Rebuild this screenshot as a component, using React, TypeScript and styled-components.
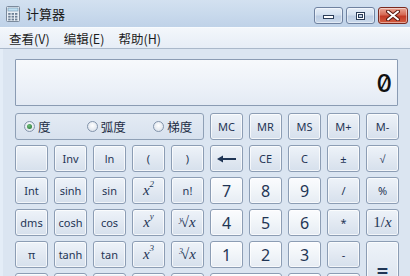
import React, { useState } from 'react';
import styled, { createGlobalStyle, css } from 'styled-components';

const GlobalStyle = createGlobalStyle`
  html, body {
    margin: 0;
    padding: 0;
    overflow: hidden;
    background: #dbe5f1;
  }
  body {
    font-family: 'Noto Sans', 'Noto Sans CJK SC', sans-serif;
  }
`;

const CJK = `'Noto Sans CJK SC', 'Noto Sans', sans-serif`;

const Window = styled.div`
  width: 410px;
  height: 276px;
  overflow: hidden;
  display: flex;
  flex-direction: column;
  background: #dbe5f1;
`;

const TitleBar = styled.div`
  height: 27px;
  flex: none;
  display: flex;
  align-items: center;
  padding: 0 2px 0 6px;
  background: linear-gradient(#d3e1f0 0%, #c8d9ec 55%, #bfd2e8 100%);
`;

const TitleText = styled.span`
  margin-left: 6px;
  font-family: ${CJK};
  font-size: 13px;
  color: #1b1b1b;
  flex: 1;
`;

const CaptionGroup = styled.div`
  display: flex;
  gap: 3px;
  align-self: flex-start;
  margin-top: 7px;
`;

type CapKind = 'plain' | 'close';

const CaptionButton = styled.div<{ $kind: CapKind }>`
  width: ${(p) => (p.$kind === 'close' ? 30 : 29)}px;
  height: 17px;
  box-sizing: border-box;
  border: 1px solid ${(p) => (p.$kind === 'close' ? '#7a2a20' : '#6f82a0')};
  border-radius: 3px;
  display: flex;
  align-items: center;
  justify-content: center;
  box-shadow: inset 0 0 0 1px rgba(255, 255, 255, 0.45);
  background: ${(p) =>
    p.$kind === 'close'
      ? 'linear-gradient(#e9a898 0%, #d66a55 45%, #c23a26 55%, #d35c40 100%)'
      : 'linear-gradient(#e6eef8 0%, #d3e0ef 45%, #bccde3 55%, #cbdaec 100%)'};
`;

const MenuBar = styled.div`
  height: 20px;
  flex: none;
  display: flex;
  align-items: center;
  padding-left: 9px;
  gap: 14px;
  background: linear-gradient(#f3f7fb, #e6edf6);
  border-top: 1px solid #f8fbfe;
  border-bottom: 1px solid #aab8ca;
`;

const MenuItem = styled.span`
  font-family: ${CJK};
  font-size: 12.5px;
  color: #1e1e1e;
`;

const Body = styled.div`
  flex: 1;
  padding: 10px 12px 0 12px;
  background: #dbe5f1;
  border-left: 3px solid #e4edf7;
`;

const Display = styled.div`
  height: 47px;
  box-sizing: border-box;
  border: 1px solid #8a9bb3;
  border-radius: 1px;
  background: linear-gradient(#f7f9fc 0%, #ecf1f8 60%, #e3eaf4 100%);
  display: flex;
  align-items: flex-end;
  justify-content: flex-end;
  padding: 0 5px 9px 0;
  margin-bottom: 7px;
`;

const Readout = styled.span`
  font-family: Inter, 'DejaVu Sans Mono', monospace;
  font-variant-numeric: slashed-zero;
  font-feature-settings: 'zero' 1;
  font-weight: 500;
  font-size: 24px;
  line-height: 24px;
  color: #111;
`;

const Keypad = styled.div`
  display: grid;
  grid-template-columns: repeat(10, 33px);
  grid-auto-rows: 27px;
  column-gap: 6px;
  row-gap: 5px;
`;

const GroupBox = styled.div`
  grid-column: span 5;
  box-sizing: border-box;
  border: 1px solid #8fa0b6;
  border-radius: 3px;
  background: linear-gradient(#e4ebf4, #d7e1ee);
  display: flex;
  align-items: center;
  padding-left: 8px;
`;

const RadioLabel = styled.label<{ $width: number }>`
  display: flex;
  align-items: center;
  width: ${(p) => p.$width}px;
  font-family: ${CJK};
  font-size: 12.5px;
  color: #1e2d45;
`;

const RadioDot = styled.span<{ $on: boolean }>`
  width: 11px;
  height: 11px;
  box-sizing: border-box;
  border-radius: 50%;
  border: 1px solid #8394ab;
  background: radial-gradient(circle at 50% 40%, #ffffff, #d4dce7);
  margin-right: 3px;
  display: flex;
  align-items: center;
  justify-content: center;
  &::after {
    content: '';
    display: ${(p) => (p.$on ? 'block' : 'none')};
    width: 5px;
    height: 5px;
    border-radius: 50%;
    background: radial-gradient(circle at 40% 35%, #6fc07a, #1f6b2e);
  }
`;

type KeyKind = 'fn' | 'num';

const Key = styled.button<{ $kind?: KeyKind; $tall?: boolean; $wide?: boolean }>`
  all: unset;
  box-sizing: border-box;
  border: 1px solid #8c9db4;
  border-radius: 3px;
  display: flex;
  align-items: center;
  justify-content: center;
  color: #1f3555;
  font-family: 'Noto Sans', sans-serif;
  font-size: 11px;
  box-shadow: inset 0 0 0 1px rgba(255, 255, 255, 0.7);
  background: linear-gradient(#eef3f9 0%, #e2e9f2 50%, #d6e0ec 100%);
  ${(p) =>
    p.$kind === 'num' &&
    css`
      font-size: 16px;
      background: linear-gradient(#fbfcfe 0%, #f1f5f9 50%, #e6ecf3 100%);
    `}
  ${(p) => p.$tall && css`grid-row: span 2;`}
  ${(p) => p.$wide && css`grid-column: span 2;`}
`;

const MathLabel = styled.span`
  font-family: 'Liberation Serif', 'DejaVu Serif', serif;
  font-style: italic;
  font-size: 15px;
  color: #1f3555;
  white-space: nowrap;
`;

const Sup = styled.sup`
  font-size: 9px;
  font-style: italic;
  position: relative;
  top: -2px;
  vertical-align: super;
  line-height: 0;
`;

const RootIdx = styled.span`
  font-size: 8px;
  font-style: italic;
  position: relative;
  top: -5px;
  margin-right: -2px;
`;

const Upright = styled.span`
  font-style: normal;
`;

const Equals = styled.span`
  font-size: 20px;
  font-weight: bold;
  line-height: 14px;
`;

const AppIcon = () => (
  <svg width="14" height="16" viewBox="0 0 14 16">
    <rect x="0.5" y="0.5" width="13" height="15" rx="1" fill="#e8eef5" stroke="#7b8a9c" />
    <rect x="2" y="2" width="10" height="3" fill="#bfe0f2" stroke="#6f90aa" strokeWidth="0.6" />
    {[0, 1, 2].map((r) =>
      [0, 1, 2].map((c) => (
        <rect key={`${r}-${c}`} x={2.2 + c * 3.4} y={7 + r * 2.8} width="2.4" height="1.8" fill="#6d7f94" />
      ))
    )}
  </svg>
);

const MinGlyph = () => (
  <svg width="13" height="8" viewBox="0 0 13 8">
    <rect x="1.5" y="3.5" width="10" height="3" fill="#fff" stroke="#2b3d58" />
  </svg>
);

const MaxGlyph = () => (
  <svg width="11" height="10" viewBox="0 0 11 10">
    <rect x="1.5" y="1.5" width="8" height="7" fill="none" stroke="#2b3d58" strokeWidth="1" />
    <rect x="2.5" y="2.5" width="6" height="5" fill="none" stroke="#fff" strokeWidth="1" />
    <rect x="3.5" y="3.5" width="4" height="3" fill="none" stroke="#2b3d58" strokeWidth="1" />
  </svg>
);

const CloseGlyph = () => (
  <svg width="14" height="11" viewBox="0 0 14 11">
    <path d="M2 1.5 L12 9.5 M12 1.5 L2 9.5" stroke="#5a1a12" strokeWidth="4" strokeLinecap="round" />
    <path d="M2 1.5 L12 9.5 M12 1.5 L2 9.5" stroke="#fff" strokeWidth="2" strokeLinecap="round" />
  </svg>
);

const BackArrow = () => (
  <svg width="20" height="8" viewBox="0 0 20 8">
    <path d="M4 4 H19" stroke="#1f3555" strokeWidth="2" />
    <path d="M0 4 L6 0.5 L6 7.5 Z" fill="#1f3555" />
  </svg>
);

type KeyDef = { label: React.ReactNode; kind?: KeyKind; tall?: boolean; wide?: boolean };

const memKeys = ['MC', 'MR', 'MS', 'M+', 'M-'];

const keys: KeyDef[] = [
  { label: '' },
  { label: 'Inv' },
  { label: 'ln' },
  { label: '(' },
  { label: ')' },
  { label: <BackArrow /> },
  { label: 'CE' },
  { label: 'C' },
  { label: '±' },
  { label: '√' },

  { label: 'Int' },
  { label: 'sinh' },
  { label: 'sin' },
  { label: <MathLabel>x<Sup>2</Sup></MathLabel> },
  { label: 'n!' },
  { label: '7', kind: 'num' },
  { label: '8', kind: 'num' },
  { label: '9', kind: 'num' },
  { label: '/' },
  { label: '%' },

  { label: 'dms' },
  { label: 'cosh' },
  { label: 'cos' },
  { label: <MathLabel>x<Sup>y</Sup></MathLabel> },
  { label: <MathLabel><RootIdx>y</RootIdx><Upright>√</Upright>x</MathLabel> },
  { label: '4', kind: 'num' },
  { label: '5', kind: 'num' },
  { label: '6', kind: 'num' },
  { label: '*' },
  { label: <MathLabel><Upright>1/</Upright>x</MathLabel> },

  { label: 'π' },
  { label: 'tanh' },
  { label: 'tan' },
  { label: <MathLabel>x<Sup>3</Sup></MathLabel> },
  { label: <MathLabel><RootIdx>3</RootIdx><Upright>√</Upright>x</MathLabel> },
  { label: '1', kind: 'num' },
  { label: '2', kind: 'num' },
  { label: '3', kind: 'num' },
  { label: '-' },
  { label: <Equals>=</Equals>, tall: true },

  { label: 'F-E' },
  { label: 'Exp' },
  { label: 'Mod' },
  { label: 'log' },
  { label: <MathLabel><Upright>10</Upright><Sup>x</Sup></MathLabel> },
  { label: '0', kind: 'num', wide: true },
  { label: '.', kind: 'num' },
  { label: '+' },
];

const angleModes = [
  { name: '度', width: 63 },
  { name: '弧度', width: 67 },
  { name: '梯度', width: 50 },
];

const App: React.FC = () => {
  const [mode, setMode] = useState('度');

  return (
    <Window>
      <GlobalStyle />
      <TitleBar>
        <AppIcon />
        <TitleText>计算器</TitleText>
        <CaptionGroup>
          <CaptionButton $kind="plain"><MinGlyph /></CaptionButton>
          <CaptionButton $kind="plain"><MaxGlyph /></CaptionButton>
          <CaptionButton $kind="close"><CloseGlyph /></CaptionButton>
        </CaptionGroup>
      </TitleBar>
      <MenuBar>
        <MenuItem>查看(V)</MenuItem>
        <MenuItem>编辑(E)</MenuItem>
        <MenuItem>帮助(H)</MenuItem>
      </MenuBar>
      <Body>
        <Display>
          <Readout>0</Readout>
        </Display>
        <Keypad>
          <GroupBox>
            {angleModes.map((m) => (
              <RadioLabel key={m.name} $width={m.width} onClick={() => setMode(m.name)}>
                <RadioDot $on={mode === m.name} />
                {m.name}
              </RadioLabel>
            ))}
          </GroupBox>
          {memKeys.map((k) => (
            <Key key={k}>{k}</Key>
          ))}
          {keys.map((k, i) => (
            <Key key={i} $kind={k.kind} $tall={k.tall} $wide={k.wide}>
              {k.label}
            </Key>
          ))}
        </Keypad>
      </Body>
    </Window>
  );
};

export default App;
